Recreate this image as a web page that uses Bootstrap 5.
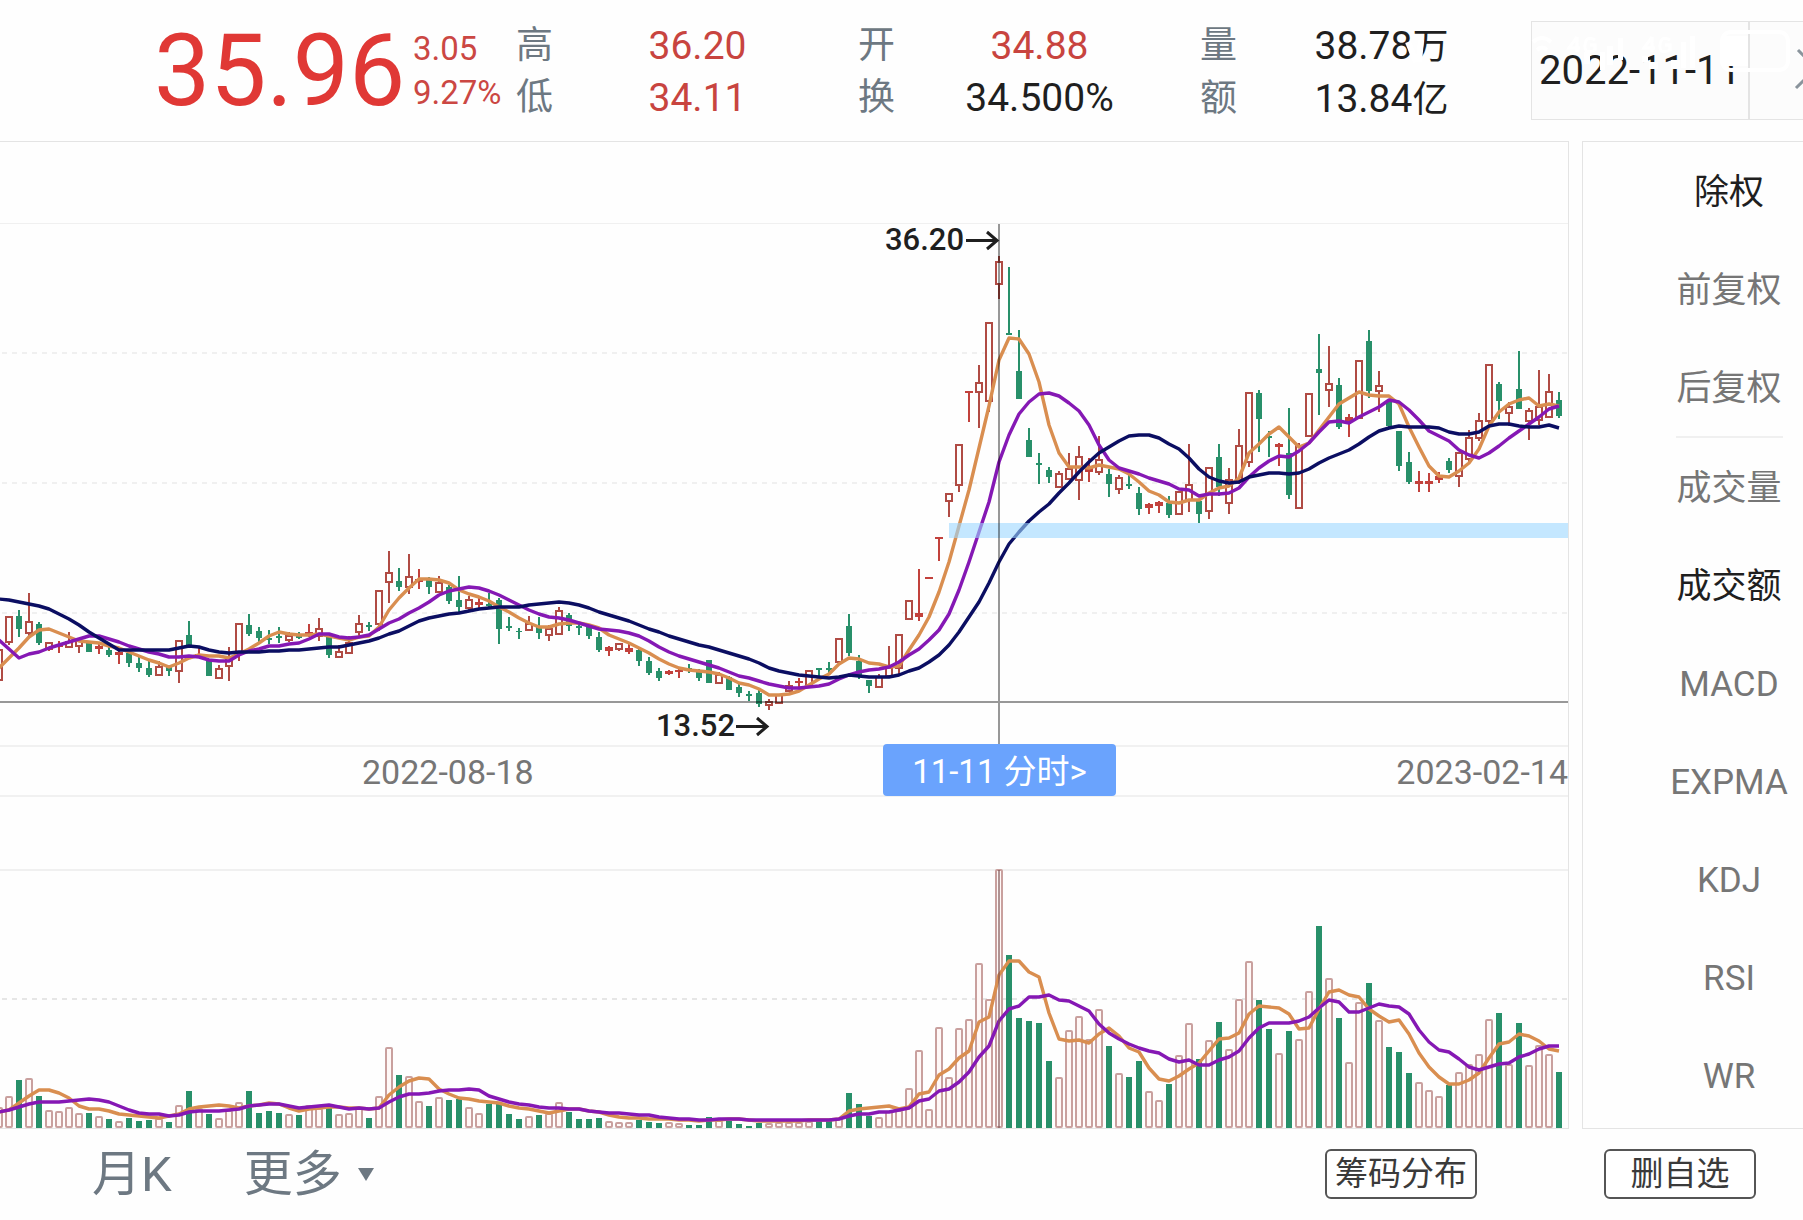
<!DOCTYPE html>
<html lang="zh-CN">
<head>
<meta charset="utf-8">
<meta name="viewport" content="width=device-width, initial-scale=1">
<title>35.96 日K</title>
<link rel="stylesheet" href="https://cdn.jsdelivr.net/npm/bootstrap@5.3.0/dist/css/bootstrap.min.css">
<style>
  :root {
    --up: #b84a44;
    --price: #e03835;
    --ink: #1f1f1f;
    --slate: #6d7882;
    --grey: #767676;
    --rule: #e4e4e4;
  }
  body {
    font-family: Roboto, "Noto Sans CJK SC", sans-serif;
    color: var(--ink);
    background: #fefefe;
    overflow-x: hidden;
  }
  .quote-bar { height: 141px; }
  .quote-main { padding-left: 154px; width: 413px; }
  .last-price { font-size: 100px; line-height: 100px; color: var(--price); }
  .delta { width: 103px; font-size: 33px; line-height: 44px; color: #cb4743; }
  .quote-grid { gap: 16px; line-height: 52px; font-size: 39px; padding-right: 5px; padding-top: 5px; }
  .quote-grid dl { flex: 1 1 0; min-width: 0; }
  .quote-grid dt { font-size: 37px; font-weight: 400; color: var(--slate); width: 37px; }
  .quote-grid dd .han { font-size: 36px; }
  .rise { color: #c8443f; }
  .date-box { width: 272px; height: 99px; background: #fcfcfc; border: 1px solid var(--rule); border-right: 0; font-size: 40px; }
  .date-text { width: 218px; border-right: 2px solid var(--rule); padding-left: 7px; }
  .status-icons { left: 1390px; top: 22px; width: 413px; height: 60px; }
  .panes { gap: 13px; }
  .chart-pane { border: 1px solid var(--rule); border-left: 0; min-width: 0; }
  .chart-pane svg { display: block; width: 100%; height: auto; }
  .axis-row { height: 52px; border-top: 2px solid #f1f1f1; border-bottom: 2px solid #f1f1f1; padding-left: 362px; padding-top: 2px; font-size: 34px; color: var(--grey); }
  .day-tag { left: 883px; top: -3px; width: 233px; height: 52px; border-radius: 4px; background: #6aa3fd; border: 0; color: #fff; font-size: 33px; line-height: 52px; padding: 2px 0 0; }
  .side-pane { width: 221px; border: 1px solid var(--rule); border-right: 0; padding-left: 72px; font-size: 35px; }
  .side-pane button { height: 98px; padding: 4px 0 0; border: 0; background: none; color: var(--grey); white-space: nowrap; }
  .side-pane button.on { color: var(--ink); }
  .side-pane hr { width: 107px; height: 2px; background: #f0f0f0; border: 0; opacity: 1; margin: 0; }
  .foot-bar { height: 91px; padding-left: 92px; font-size: 49px; color: var(--slate); }
  .foot-bar .plain { border: 0; background: none; padding: 0; color: inherit; line-height: 72px; }
  .boxed { width: 152px; height: 50px; border: 2px solid #555; border-radius: 6px; background: #fff; color: #3a3a3a; font-size: 33px; line-height: 44px; padding: 0; white-space: nowrap; margin-bottom: 2px; }
  .boxed-last { margin: 0 47px 2px 127px; }
</style>
</head>
<body>
<header class="quote-bar d-flex align-items-center position-relative">
  <div class="quote-main flex-shrink-0"><div class="last-price">35.96</div></div>
  <div class="delta flex-shrink-0"><div>3.05</div><div>9.27%</div></div>
  <div class="quote-grid d-flex flex-fill">
    <dl class="m-0">
      <div class="d-flex"><dt>高</dt><dd class="m-0 flex-fill text-center rise">36.20</dd></div>
      <div class="d-flex"><dt>低</dt><dd class="m-0 flex-fill text-center rise">34.11</dd></div>
    </dl>
    <dl class="m-0">
      <div class="d-flex"><dt>开</dt><dd class="m-0 flex-fill text-center rise">34.88</dd></div>
      <div class="d-flex"><dt>换</dt><dd class="m-0 flex-fill text-center">34.500%</dd></div>
    </dl>
    <dl class="m-0">
      <div class="d-flex"><dt>量</dt><dd class="m-0 flex-fill text-center">38.78<span class="han">万</span></dd></div>
      <div class="d-flex"><dt>额</dt><dd class="m-0 flex-fill text-center">13.84<span class="han">亿</span></dd></div>
    </dl>
  </div>
  <div class="date-box d-flex flex-shrink-0">
    <div class="date-text d-flex align-items-center text-nowrap">2022-11-11</div>
    <svg width="53" height="97" viewBox="1750 22 53 97" aria-hidden="true"><path d="M1798 50L1816 68.500L1796 88" fill="none" stroke="#8a949c" stroke-width="3"/></svg>
  </div>
  <!-- white phone status icons lying over the header -->
  <svg class="status-icons position-absolute" viewBox="1390 22 413 60" aria-hidden="true" fill="none" stroke="#fff">
    <path d="M1408 42l8 20M1421 40l-2 22" stroke-width="6"/>
    <path d="M1533 42q9-8 18 0M1537 50q5-5 10 0" stroke-width="4"/>
    <g stroke-width="3"><path d="M1577 37l-8 11h11M1577 37v15M1595 40q-9-5-10 5t10 5v-5h-5"/><path d="M1652 37l-8 11h11M1652 37v15M1670 40q-9-5-10 5t10 5v-5h-5"/></g>
    <g fill="#fff" stroke="none">
      <rect x="1584" y="52" width="6" height="12"/><rect x="1600" y="52" width="5" height="18"/>
      <rect x="1607" y="46" width="6" height="19"/><rect x="1618" y="38" width="5" height="22"/>
      <rect x="1649" y="62" width="9" height="7"/><rect x="1642" y="56" width="6" height="6"/>
      <rect x="1671" y="60" width="9" height="9"/><rect x="1681" y="42" width="5" height="26"/>
      <rect x="1690" y="36" width="5" height="32"/><rect x="1724" y="36" width="24" height="30"/>
    </g>
    <rect x="1722" y="32" width="66" height="38" rx="9" stroke-width="4"/>
  </svg>
</header>

<main class="panes d-flex">
  <section class="chart-pane flex-fill">
    <svg id="price" viewBox="0 142 1568 603" role="img" aria-label="日K线">
      <g stroke="#f0f0f0" stroke-width="2"><path d="M0 223.500H1568" stroke-width="1"/><path d="M2 353H1568M2 483H1568M2 613H1568" stroke-dasharray="5 5"/></g>
      <g id="candles"></g><g id="averages" fill="none" stroke-width="3.400" stroke-linejoin="round"></g>
      <rect x="949" y="523" width="620" height="15" fill="#9dd7ff" fill-opacity=".6"/>
      <path d="M0 702H1568M999 224V745" stroke="#000" stroke-opacity=".4" stroke-width="2"/>
      <g font-size="31" font-weight="500" fill="#1f1f1f"><text x="885" y="250">36.20</text><text x="656" y="736">13.52</text></g>
      <g fill="none" stroke="#1f1f1f" stroke-width="3"><path d="M966 240.500H997M987 232L997 240.500L987 249"/><path d="M736 726.500H767M757 718L767 726.500L757 735"/></g>
    </svg>
    <div class="axis-row d-flex align-items-center justify-content-between position-relative">
      <span>2022-08-18</span><span>2023-02-14</span>
      <button type="button" class="day-tag position-absolute">11-11 分时&gt;</button>
    </div>
    <svg id="volume" viewBox="0 797 1568 331" role="img" aria-label="成交额">
      <path d="M0 870H1568" stroke="#f0f0f0" stroke-width="2"/><path d="M2 999H1568" stroke="#e6e6e6" stroke-width="2" stroke-dasharray="5 5"/>
      <g id="bars"></g><g id="barAverages" fill="none" stroke-width="3.400" stroke-linejoin="round"></g>
      <path d="M999 870V1128" stroke="#7a5050" stroke-opacity=".6" stroke-width="2"/>
    </svg>
  </section>
  <nav class="side-pane d-flex flex-column align-items-center flex-shrink-0">
    <button type="button" class="on">除权</button>
    <button type="button">前复权</button>
    <button type="button">后复权</button>
    <hr>
    <button type="button">成交量</button>
    <button type="button" class="on">成交额</button>
    <button type="button">MACD</button>
    <button type="button">EXPMA</button>
    <button type="button">KDJ</button>
    <button type="button">RSI</button>
    <button type="button">WR</button>
  </nav>
</main>

<footer class="foot-bar d-flex align-items-center">
  <button type="button" class="plain">月K</button>
  <button type="button" class="plain d-flex align-items-center ms-5 ps-4">更多<svg class="ms-3" width="16" height="14" viewBox="0 0 16 14" aria-hidden="true"><path d="M0 0H16L8 13Z" fill="#6d7882"/></svg></button>
  <button type="button" class="boxed ms-auto">筹码分布</button>
  <button type="button" class="boxed boxed-last">删自选</button>
</footer>

<script src="https://cdn.jsdelivr.net/npm/bootstrap@5.3.0/dist/js/bootstrap.bundle.min.js"></script>
<script>
// One entry per day: kind (r hollow rise, R narrow rise, g fall), high, body top, body bottom, low.
const days = `r 649 650 680 680;r 617 617 642 645;g 610 616 629 637;r 593 622 633 638;g 622 624 643 645;r 643 643 649 651;R 641 645 647 653;r 632 642 647 647;r 640 641 646 653;g 642 642 652 652
R 644 646 649 654;g 646 650 655 657;R 650 652 655 664;g 652 653 663 667;g 657 663 668 672;g 661 668 675 677;r 661 667 675 676;g 665 667 671 676;r 640 641 671 683;g 621 635 648 648
R 647 654 656 658;g 661 661 676 676;r 665 669 678 679;r 647 658 666 681;r 623 624 652 661;g 614 625 634 636;g 627 631 638 642;g 630 638 640 644;g 627 636 638 643;r 632 636 640 642
g 632 636 638 639;R 624 632 634 637;r 618 629 636 641;g 637 637 655 658;r 645 652 657 657;r 636 643 653 653;r 615 624 632 637;g 622 625 627 631;r 590 591 624 631;r 551 573 582 603
g 568 581 587 591;r 554 577 587 594;R 569 579 582 589;g 577 579 587 594;r 576 583 592 593;g 585 587 601 604;g 576 600 607 612;r 596 600 608 610;R 597 602 605 608;g 593 604 606 609
g 598 600 629 644;g 617 626 628 631;g 628 631 632 639;r 616 624 630 630;g 617 627 633 639;r 625 629 635 641;r 607 611 634 634;g 613 615 626 631;g 622 626 628 635;g 625 627 636 639
g 632 637 650 652;R 646 647 651 656;r 643 644 649 651;R 644 648 652 654;g 648 650 661 666;g 657 661 673 675;g 668 671 678 681;R 670 671 674 675;R 668 670 672 678;g 664 668 670 673
g 669 672 678 681;g 660 660 683 683;r 672 675 683 683;g 676 677 690 690;g 683 687 693 697;g 691 694 696 701;g 690 693 704 707;r 699 702 705 710;r 694 695 703 704;r 681 686 691 692
R 678 681 683 688;r 670 671 685 685;g 668 668 670 677;g 662 668 670 675;r 638 639 662 663;g 614 626 653 656;g 655 661 676 679;g 680 680 686 693;r 674 677 687 687;r 646 668 676 676
r 634 635 668 674;r 600 601 619 620;R 569 613 617 621;R 577 577 579 579;R 537 537 539 561;r 493 494 501 517;r 444 445 485 492;R 391 391 393 422;r 365 383 392 428;r 322 323 401 412
r 256 262 284 299;g 267 333 335 335;g 330 371 399 399;g 428 440 457 457;g 453 463 465 484;g 467 470 477 483;r 471 474 487 487;r 453 469 479 479;r 446 457 480 500;R 458 468 472 482
r 436 460 472 475;g 469 474 484 497;r 475 478 489 494;g 473 484 486 489;g 487 493 509 515;R 503 504 508 514;R 501 502 506 513;g 496 503 515 518;r 491 492 514 515;r 444 485 500 512
g 500 501 514 523;r 467 468 511 519;g 444 457 487 496;r 468 480 503 514;r 429 446 480 484;r 392 393 462 467;g 390 393 419 452;g 431 436 438 457;R 443 444 447 466;g 408 453 495 499
r 443 446 508 508;r 393 394 436 436;g 334 369 373 415;r 346 384 390 407;g 378 385 427 429;R 414 417 421 437;r 360 361 418 418;g 330 341 391 398;r 371 386 391 412;g 400 400 426 427
g 431 431 466 471;g 452 462 482 484;R 471 481 484 492;R 473 481 484 492;R 472 476 480 483;g 458 461 470 473;r 452 453 476 487;r 430 438 459 464;r 413 421 438 441;r 365 365 421 424
g 382 384 401 419;r 402 407 413 426;g 351 389 409 409;r 408 411 421 440;r 370 407 420 425;r 374 392 417 417;g 392 400 416 418`.split(/[;\n]/).map(d => d.split(' '));

const lines = {
  '#d98e50': '668 658 648 637 630 629 633 637 641 642 643 646 648 652 656 660 663 667 663 658 655 656 656 658 654 649 643 636 632 634 635 635 634 636 638 640 637 636 627 610 598 588 579 579 580 583 590 594 597 601 607 612 618 623 627 627 624 623 623 625 628 635 639 643 648 653 659 664 668 670 671 672 674 678 683 685 689 695 695 694 691 685 679 674 664 658 659 663 664 667 666 650 635 617 592 562 526 490 448 406 360 338 339 354 382 425 453 467 467 468 465 467 469 474 482 491 495 502 503 500 500 493 488 486 478 453 444 434 427 437 447 443 430 417 404 398 392 395 396 396 404 427 447 466 476 477 471 463 449 426 412 404 400 398 406 404 406',
  '#8518b4': '640 649 658 654 652 648 645 642 639 636 636 639 642 646 649 652 654 657 657 656 657 660 661 661 655 651 649 646 646 644 643 639 634 634 637 638 637 635 629 623 619 613 608 602 595 591 589 587 588 591 595 600 605 610 614 617 618 620 623 626 629 630 631 633 636 641 647 652 656 659 662 665 668 672 676 678 681 684 686 688 688 687 686 684 679 675 672 670 669 667 662 655 649 640 630 614 590 562 532 502 462 435 414 402 394 393 396 403 411 425 445 460 468 471 474 478 481 484 489 490 496 494 494 493 488 477 468 461 456 457 451 443 432 422 421 423 417 412 407 400 402 410 420 431 436 441 450 455 458 453 446 438 431 424 417 409 406',
  '#0b0e62': '599 600 602 604 606 609 614 619 625 632 638 644 650 650 650 650 650 650 648 646 647 650 652 653 652 652 652 651 651 650 650 649 648 647 647 645 643 641 638 634 631 626 621 618 616 614 613 611 609 608 607 607 607 605 604 603 602 603 605 608 612 615 618 621 625 629 632 636 639 642 645 647 650 653 656 659 663 668 671 673 675 676 677 678 677 675 676 677 677 677 675 671 668 662 655 645 632 617 602 583 562 544 532 521 512 504 493 483 472 462 453 447 441 436 435 435 438 444 449 458 469 477 481 483 482 477 475 473 473 474 473 469 463 458 454 450 444 437 431 428 426 427 427 427 428 432 434 434 432 426 424 424 426 427 427 425 428'
};
const turnover = '1108 1097 1080 1079 1096 1111 1112 1108 1114 1113 1117 1119 1122 1118 1121 1120 1119 1122 1106 1091 1109 1114 1119 1111 1103 1091 1113 1111 1113 1115 1115 1106 1109 1108 1115 1114 1109 1118 1097 1048 1075 1077 1102 1106 1098 1100 1099 1108 1114 1104 1104 1114 1119 1117 1115 1114 1103 1112 1119 1119 1118 1122 1123 1123 1120 1122 1123 1123 1124 1125 1125 1117 1121 1121 1124 1126 1123 1124 1123 1123 1123 1122 1121 1120 1119 1093 1104 1116 1118 1112 1111 1089 1051 1110 1028 1078 1029 1020 964 1000 870 955 1018 1021 1023 1061 1078 1031 1017 1040 1010 1046 1074 1077 1061 1092 1101 1084 1056 1024 1059 1041 1022 1050 1000 962 1000 1029 1054 1031 1040 992 926 979 1018 1063 1003 983 1021 1047 1052 1073 1083 1091 1097 1085 1073 1065 1055 1020 1013 1065 1023 1066 1046 1055 1072'.split(' ');
const turnoverLines = {
  '#d98e50': '1112 1110 1103 1096 1090 1090 1093 1098 1106 1109 1109 1111 1114 1115 1116 1117 1118 1116 1114 1109 1107 1106 1105 1106 1108 1106 1105 1103 1104 1108 1111 1109 1108 1107 1107 1108 1108 1109 1108 1095 1087 1081 1078 1079 1089 1094 1098 1099 1101 1102 1103 1106 1108 1109 1111 1113 1111 1109 1109 1111 1112 1115 1117 1118 1118 1119 1119 1119 1120 1120 1121 1120 1120 1119 1119 1120 1121 1121 1121 1121 1121 1120 1120 1120 1119 1111 1109 1108 1107 1106 1109 1107 1094 1092 1075 1069 1058 1051 1022 1017 975 961 961 972 977 1013 1039 1041 1040 1043 1034 1028 1036 1048 1052 1068 1079 1081 1076 1069 1063 1051 1039 1038 1033 1014 1006 1007 1008 1014 1029 1028 1009 992 990 995 997 1009 1016 1022 1020 1034 1053 1067 1077 1084 1084 1080 1073 1058 1044 1042 1034 1036 1041 1049 1051',
  '#8518b4': '1112 1110 1107 1104 1102 1102 1102 1101 1100 1099 1100 1102 1106 1110 1113 1114 1114 1116 1115 1112 1111 1111 1111 1110 1109 1106 1105 1104 1104 1106 1108 1107 1106 1105 1107 1109 1108 1109 1108 1102 1097 1094 1094 1093 1091 1090 1090 1089 1090 1096 1099 1102 1104 1105 1107 1108 1108 1109 1109 1111 1112 1113 1113 1114 1115 1115 1117 1118 1119 1119 1120 1120 1119 1119 1119 1120 1120 1120 1120 1120 1120 1120 1120 1120 1119 1116 1114 1114 1112 1112 1110 1108 1101 1099 1091 1089 1082 1072 1057 1046 1021 1009 1006 997 997 995 1000 1001 1006 1011 1024 1033 1039 1044 1048 1051 1053 1059 1062 1060 1065 1065 1060 1057 1051 1038 1028 1023 1023 1023 1021 1017 1008 1000 1002 1012 1012 1008 1004 1006 1007 1014 1030 1042 1050 1052 1059 1067 1070 1067 1064 1063 1057 1054 1049 1046 1046'
};

const xAt = i => i * 10 - 1;
const put = (id, html) => { document.getElementById(id).innerHTML = html; };
const curves = set => Object.entries(set).map(([c, v]) =>
  `<polyline stroke="${c}" points="${v.split(' ').map((y, i) => xAt(i) + ',' + y).join(' ')}"/>`).join('');

put('candles', days.map(([k, h, t, b, l], i) => {
  const x = xAt(i), c = k === 'g' ? '#28906a' : k === 'R' ? '#c2413c' : '#b04b44';
  const wick = `<path d="M${x} ${h}V${t}M${x} ${b}V${l}" stroke="${c}" stroke-width="2"/>`;
  const body = k === 'r'
    ? `<rect x="${x - 3}" y="${t}" width="6" height="${Math.max(b - t, 2)}" fill="none" stroke="${c}" stroke-width="2"/>`
    : `<rect x="${k === 'R' ? x - 4 : x - 3}" y="${t}" width="${k === 'R' ? 8 : 6}" height="${b - t}" fill="${c}"/>`;
  return wick + body;
}).join(''));
put('averages', curves(lines));
put('bars', turnover.map((y, i) => days[i][0] === 'g'
  ? `<rect x="${xAt(i) - 3}" y="${y}" width="6" height="${1128 - y}" fill="#28906a"/>`
  : `<rect x="${xAt(i) - 3}" y="${y}" width="6" height="${1127 - y}" rx="1" fill="#fff8f7" stroke="#c9a09e" stroke-width="2"/>`).join(''));
put('barAverages', curves(turnoverLines));
</script>
</body>
</html>
